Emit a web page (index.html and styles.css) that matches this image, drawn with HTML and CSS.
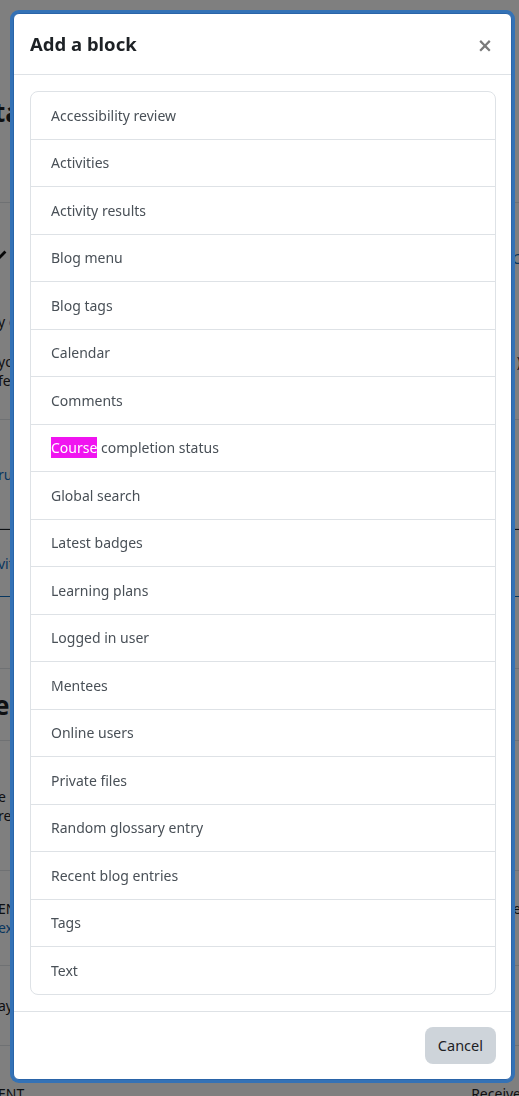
FILE: index.html
```html
<!DOCTYPE html>
<html lang="en">
<head>
<meta charset="utf-8">
<title>Add a block</title>
<link rel="stylesheet" href="styles.css">
</head>
<body>
<div class="page">
  <div class="row r1"><span class="l big shift">ta</span><span class="r"></span></div>
  <div class="row r2">
    <div class="lines">
      <div class="pair"><span class="l">
        <svg class="pencil" width="12" height="12" viewBox="0 0 12 12"><path d="M1 11 L1.6 8.4 L8.4 1.6 L10.4 3.6 L3.6 10.4 Z" fill="#111"/></svg></span><span class="r blue">C</span></div>
      <div class="pair gap1"><span class="l">y <span class="blue">e</span></span><span class="r"></span></div>
      <div class="pair gap2"><span class="l">yo</span><span class="r">)</span></div>
      <div class="pair"><span class="l">fe</span><span class="r"></span></div>
    </div>
  </div>
  <div class="row r3"><span class="l blue">ru</span></div>
  <div class="row r4 bluebar"><span class="l blue">vity</span></div>
  <div class="row r5"></div>
  <div class="row r6"><span class="l big shift">e</span></div>
  <div class="row r7">
    <div class="lines"><span class="l">e</span><span class="l">rea</span></div>
  </div>
  <div class="row r8">
    <div class="lines"><div class="pair"><span class="l">EN</span><span class="r">e</span></div><span class="l blue">ext</span></div>
  </div>
  <div class="row r9"><span class="l">ay</span></div>
  <div class="row r10"><span class="l">ENT</span><span class="r">Receive</span></div>
</div>
<div class="backdrop"></div>
<div class="modal" role="dialog" aria-labelledby="modal-title">
  <div class="modal-header">
    <h5 class="modal-title" id="modal-title">Add a block</h5>
    <button class="close" type="button" aria-label="Close">&times;</button>
  </div>
  <div class="modal-body">
    <div class="list-group">
      <a class="item">Accessibility review</a>
      <a class="item">Activities</a>
      <a class="item">Activity results</a>
      <a class="item">Blog menu</a>
      <a class="item">Blog tags</a>
      <a class="item">Calendar</a>
      <a class="item">Comments</a>
      <a class="item"><span class="hl">Course</span> completion status</a>
      <a class="item">Global search</a>
      <a class="item">Latest badges</a>
      <a class="item">Learning plans</a>
      <a class="item">Logged in user</a>
      <a class="item">Mentees</a>
      <a class="item">Online users</a>
      <a class="item">Private files</a>
      <a class="item">Random glossary entry</a>
      <a class="item">Recent blog entries</a>
      <a class="item">Tags</a>
      <a class="item">Text</a>
    </div>
  </div>
  <div class="modal-footer">
    <button class="btn-cancel" type="button">Cancel</button>
  </div>
</div>
</body>
</html>
```
FILE: styles.css
```css
* { box-sizing: border-box; }
html, body {
  margin: 0;
  padding: 0;
  width: 519px;
  height: 1096px;
  overflow: hidden;
}
body {
  font-family: "Noto Sans", "Open Sans", "DejaVu Sans", sans-serif;
  background: #fff;
  color: #1d2125;
}

/* background page (behind backdrop) */
.page {
  width: 519px;
  height: 1096px;
  overflow: hidden;
  display: flex;
  flex-direction: column;
  font-size: 14px;
  color: #1d2125;
}
.row {
  display: flex;
  justify-content: space-between;
  align-items: center;
  border-bottom: 1px solid #dee2e6;
  flex: none;
}
.row .l { margin-left: -2px; white-space: nowrap; }
.row .r { margin-right: -2px; white-space: nowrap; }
.row .shift { margin-left: -6px; }
.lines { display: flex; flex-direction: column; width: 100%; }
.pair { display: flex; justify-content: space-between; }
.blue { color: #0f6cbf; }
.big { font-size: 26px; font-weight: 700; }
.r1 { height: 203px; padding-top: 22px; }
.r2 { height: 217px; align-items: flex-start; padding-top: 46px; }
.pencil { display: block; margin-left: -2px; }
.gap1 { margin-top: 44px; }
.gap2 { margin-top: 21px; }
.r3 { height: 109px; }
.r4 { height: 68px; border-top: 1px solid #1d2125; border-bottom: 1px solid #0f6cbf; }
.r5 { height: 72px; }
.r6 { height: 72px; }
.r7 { height: 130px; }
.r8 { height: 95px; }
.r9 { height: 80px; }
.r10 { height: 80px; align-items: flex-start; padding-top: 38px; border-bottom: 0; }

.backdrop {
  position: fixed;
  inset: 0;
  background: rgba(0, 0, 0, 0.5);
}

/* modal */
.modal {
  position: fixed;
  left: 13px;
  top: 13px;
  width: 499px;
  height: 1067px;
  background: #fff;
  border: 1px solid #2a64a8;
  border-radius: 6px;
  box-shadow: 0 0 0 3px #3472b6;
  display: flex;
  flex-direction: column;
  overflow: hidden;
}
.modal-header {
  flex: none;
  height: 61px;
  display: flex;
  align-items: center;
  justify-content: space-between;
  padding: 0 16px 0 16px;
  border-bottom: 1px solid #dee2e6;
}
.modal-title {
  margin: 0;
  font-size: 18.5px;
  font-weight: 700;
  line-height: 1.2;
  color: #1d2125;
  padding-top: 0;
}
.close {
  border: 0;
  background: transparent;
  padding: 2px 2px 0 0;
  margin: 0;
  font-family: "DejaVu Sans", sans-serif;
  font-size: 19px;
  font-weight: 700;
  line-height: 1;
  color: #7a7a7a;
  cursor: pointer;
}
.modal-body {
  flex: 1;
  padding: 16px 15px 16px 16px;
}
.list-group {
  display: flex;
  flex-direction: column;
  border: 1px solid #dee2e6;
  border-radius: 8px;
  overflow: hidden;
}
.item {
  display: block;
  padding: 12.5px 20px 11.5px;
  font-size: 14px;
  line-height: 22.5px;
  color: #495057;
  text-decoration: none;
  border-top: 1px solid #dee2e6;
}
.item:first-child { border-top: 0; }
.hl {
  background: #f014f0;
  color: #fff;
  padding: 1px 0;
}
.modal-footer {
  flex: none;
  display: flex;
  justify-content: flex-end;
  align-items: center;
  height: 69px;
  padding: 0 15px 0 16px;
  border-top: 1px solid #dee2e6;
}
.btn-cancel {
  font-family: inherit;
  font-size: 14.5px;
  line-height: 22.5px;
  padding: 7px 13px;
  border: 0;
  border-radius: 8px;
  background: #ced4da;
  color: #1d2125;
  cursor: pointer;
}
```
